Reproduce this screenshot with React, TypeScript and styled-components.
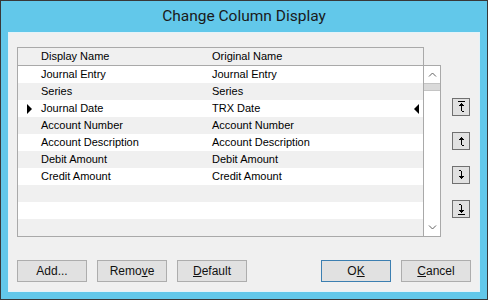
import styled, { createGlobalStyle } from 'styled-components';

const Global = createGlobalStyle`
  html, body {
    margin: 0;
    padding: 0;
    width: 488px;
    height: 300px;
    overflow: hidden;
    background: #62c8ea;
  }
  * { box-sizing: border-box; }
`;

const Window = styled.div`
  width: 488px;
  height: 300px;
  border: 1px solid #383838;
  background: #62c8ea;
  display: flex;
  flex-direction: column;
  font-family: "Liberation Sans", Arial, sans-serif;
`;

const TitleBar = styled.div`
  height: 31px;
  display: flex;
  align-items: center;
  justify-content: center;
  font-family: Roboto, "Noto Sans", sans-serif;
  font-size: 15.5px;
  color: #1a1a1a;
  padding-bottom: 1px;
`;

const Client = styled.div`
  flex: 1;
  margin: 0 7px 7px 7px;
  background: #f0f0f0;
  border: 1px solid #e4f3f9;
  padding: 14px 8px 7px 8px;
  display: flex;
  flex-direction: column;
`;

const MainRow = styled.div`
  display: flex;
  gap: 11px;
`;

const ListBox = styled.div`
  width: 424px;
  display: flex;
  flex-direction: column;
`;

const Header = styled.div`
  width: 407px;
  height: 18px;
  border: 1px solid #a9a9a9;
  border-bottom: none;
  display: grid;
  grid-template-columns: 23px 171px 1fr;
  align-items: center;
  font-size: 11px;
  color: #000;
`;

const Body = styled.div`
  border: 1px solid #a9a9a9;
  display: flex;
`;

const Rows = styled.div`
  flex: 1;
  display: flex;
  flex-direction: column;
`;

const Row = styled.div<{ $alt: boolean }>`
  height: 17px;
  display: grid;
  grid-template-columns: 23px 171px 1fr 14px;
  align-items: center;
  background: ${p => (p.$alt ? '#f0f0f0' : '#ffffff')};
  font-size: 11px;
  color: #000;
`;

const Cell = styled.span`
  white-space: nowrap;
  line-height: 15px;
`;

const Marker = styled.span`
  display: flex;
  align-items: center;
  justify-content: center;
  height: 100%;
`;

const Scrollbar = styled.div`
  width: 17px;
  border-left: 1px solid #a9a9a9;
  background: #fff;
  display: flex;
  flex-direction: column;
`;

const ScrollArrow = styled.div`
  height: 17px;
  display: flex;
  align-items: center;
  justify-content: center;
`;

const Thumb = styled.div`
  height: 8px;
  background: #dadada;
  border-top: 1px solid #c4c4c4;
  border-bottom: 1px solid #c4c4c4;
`;

const Track = styled.div`
  flex: 1;
`;

const SideColumn = styled.div`
  padding-top: 51px;
  display: flex;
  flex-direction: column;
  gap: 16px;
`;

const MoveButton = styled.button`
  width: 18px;
  height: 18px;
  padding: 0;
  border: 1px solid #707070;
  background: #e1e1e1;
  display: flex;
  align-items: center;
  justify-content: center;
`;

const ButtonRow = styled.div`
  margin-top: 23px;
  display: flex;
  align-items: center;
`;

const Button = styled.button<{ $primary?: boolean }>`
  width: 70px;
  height: 22px;
  margin-right: 10px;
  border: 1px solid ${p => (p.$primary ? '#3c7fb1' : '#adadad')};
  background: #e1e1e1;
  font-family: "Liberation Sans", Arial, sans-serif;
  font-size: 12px;
  color: #111;
  padding: 0;
  &:last-child { margin-right: 0; }
`;

const Spacer = styled.div`
  flex: 1;
`;

const RightTri = () => (
  <svg width="5" height="10" viewBox="0 0 5 10">
    <polygon points="0,0 5,5 0,10" fill="#000" />
  </svg>
);

const LeftTri = () => (
  <svg width="5" height="10" viewBox="0 0 5 10">
    <polygon points="5,0 0,5 5,10" fill="#000" />
  </svg>
);

const Chevron = ({ up }: { up: boolean }) => (
  <svg width="9" height="5" viewBox="0 0 9 5">
    <polyline
      points={up ? '1,4.5 4.5,1 8,4.5' : '1,0.5 4.5,4 8,0.5'}
      fill="none"
      stroke="#606060"
      strokeWidth="1"
    />
  </svg>
);

type Kind = 'top' | 'up' | 'down' | 'bottom';

const MoveIcon = ({ kind }: { kind: Kind }) => {
  const isUp = kind === 'top' || kind === 'up';
  return (
    <svg width="9" height="12" viewBox="0 0 9 12" shapeRendering="crispEdges">
      {kind === 'top' && <rect x="1" y="0" width="7" height="1" fill="#000" />}
      {kind === 'bottom' && <rect x="1" y="11" width="7" height="1" fill="#000" />}
      {isUp ? (
        <>
          <polygon points="4.5,2 7,5 2,5" fill="#000" />
          <rect x="4" y="5" width="1" height="5" fill="#000" />
          <rect x="5" y="10" width="2" height="1" fill="#000" />
        </>
      ) : (
        <>
          <rect x="2" y="1" width="2" height="1" fill="#000" />
          <rect x="4" y="2" width="1" height="5" fill="#000" />
          <polygon points="2,7 7,7 4.5,10" fill="#000" />
        </>
      )}
    </svg>
  );
};

const data = [
  ['Journal Entry', 'Journal Entry'],
  ['Series', 'Series'],
  ['Journal Date', 'TRX Date'],
  ['Account Number', 'Account Number'],
  ['Account Description', 'Account Description'],
  ['Debit Amount', 'Debit Amount'],
  ['Credit Amount', 'Credit Amount'],
  ['', ''],
  ['', ''],
  ['', ''],
];

const selected = 2;

export default function App() {
  return (
    <>
      <Global />
      <Window>
        <TitleBar>Change Column Display</TitleBar>
        <Client>
          <MainRow>
            <ListBox>
              <Header>
                <span />
                <Cell>Display Name</Cell>
                <Cell>Original Name</Cell>
              </Header>
              <Body>
                <Rows>
                  {data.map(([a, b], i) => (
                    <Row key={i} $alt={i % 2 === 1}>
                      <Marker>{i === selected && <RightTri />}</Marker>
                      <Cell>{a}</Cell>
                      <Cell>{b}</Cell>
                      <Marker>{i === selected && <LeftTri />}</Marker>
                    </Row>
                  ))}
                </Rows>
                <Scrollbar>
                  <ScrollArrow><Chevron up /></ScrollArrow>
                  <Thumb />
                  <Track />
                  <ScrollArrow><Chevron up={false} /></ScrollArrow>
                </Scrollbar>
              </Body>
            </ListBox>
            <SideColumn>
              <MoveButton><MoveIcon kind="top" /></MoveButton>
              <MoveButton><MoveIcon kind="up" /></MoveButton>
              <MoveButton><MoveIcon kind="down" /></MoveButton>
              <MoveButton><MoveIcon kind="bottom" /></MoveButton>
            </SideColumn>
          </MainRow>
          <ButtonRow>
            <Button>Add...</Button>
            <Button>Remo<u>v</u>e</Button>
            <Button><u>D</u>efault</Button>
            <Spacer />
            <Button $primary>O<u>K</u></Button>
            <Button><u>C</u>ancel</Button>
          </ButtonRow>
        </Client>
      </Window>
    </>
  );
}
